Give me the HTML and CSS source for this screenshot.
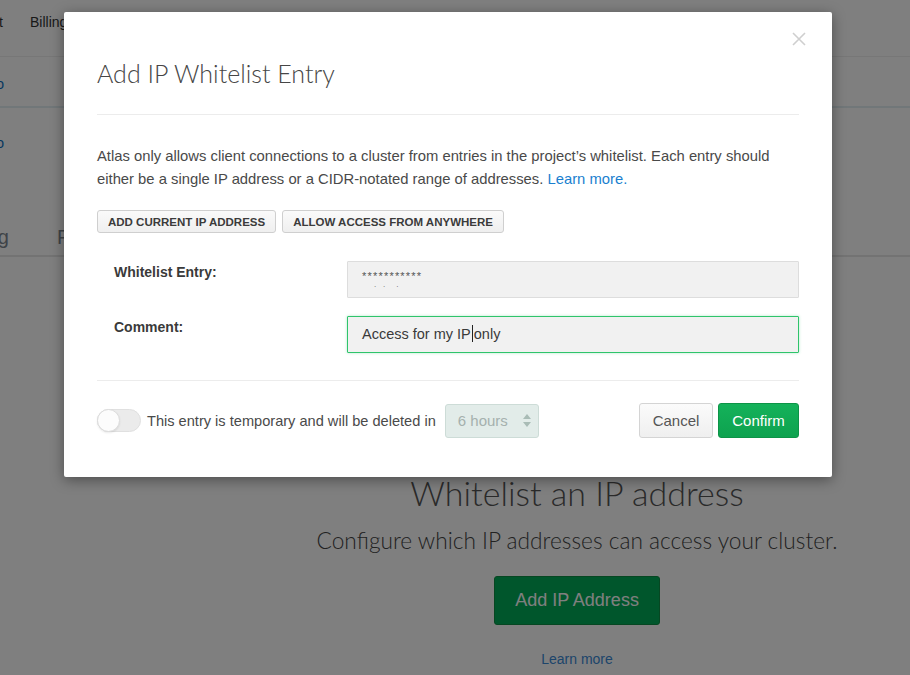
FILE: index.html
```html
<!DOCTYPE html>
<html>
<head>
<meta charset="utf-8">
<link rel="stylesheet" href="styles.css">
</head>
<body>
<div class="page">
  <header class="topnav">
    <span class="navitem clipped">Account</span>
    <span class="navitem">Billing</span>
    <span class="navitem">Support</span>
  </header>
  <div class="subnav">
    <a class="link clipped">Demo</a>
  </div>
  <div class="crumb">
    <a class="link clipped">Go to</a>
  </div>
  <div class="tabs">
    <span class="tab clipped">Logging</span>
    <span class="tab">Performance</span>
  </div>
  <section class="empty">
    <h2 class="empty-title">Whitelist an IP address</h2>
    <p class="empty-sub">Configure which IP addresses can access your cluster.</p>
    <button class="btn-big">Add IP Address</button>
    <a class="empty-link">Learn more</a>
  </section>
</div>

<div class="overlay"></div>

<div class="modal">
  <button class="close" aria-label="Close">
    <svg width="14" height="14" viewBox="0 0 14 14"><path d="M1 1 L13 13 M13 1 L1 13" stroke="#cfcfcf" stroke-width="1.6" fill="none"/></svg>
  </button>
  <h1 class="modal-title">Add IP Whitelist Entry</h1>
  <hr class="sep">
  <p class="intro">Atlas only allows client connections to a cluster from entries in the project’s whitelist. Each entry should either be a single IP address or a CIDR-notated range of addresses. <a class="learn">Learn more.</a></p>
  <div class="quick">
    <button class="btn-small">ADD CURRENT IP ADDRESS</button>
    <button class="btn-small">ALLOW ACCESS FROM ANYWHERE</button>
  </div>
  <div class="form">
    <div class="row">
      <label class="label">Whitelist Entry:</label>
      <div class="field masked"><span class="stars">***********</span><span class="dots">.&nbsp;&nbsp;&nbsp;.&nbsp;&nbsp;&nbsp;&nbsp;&nbsp;.</span></div>
    </div>
    <div class="row">
      <label class="label">Comment:</label>
      <div class="field focused">Access for my IP<span class="caret"></span>only</div>
    </div>
  </div>
  <hr class="sep sep2">
  <div class="footer">
    <span class="toggle"><span class="knob"></span></span>
    <span class="temp">This entry is temporary and will be deleted in</span>
    <span class="select">6 hours
      <svg class="arrows" width="8" height="13" viewBox="0 0 8 13"><path d="M4 0 L8 5 L0 5 Z M4 13 L8 8 L0 8 Z" fill="#a9bcb6"/></svg>
    </span>
    <span class="spacer"></span>
    <button class="btn cancel">Cancel</button>
    <button class="btn confirm">Confirm</button>
  </div>
</div>
</body>
</html>
```
FILE: styles.css
```css
* { box-sizing: border-box; }
html, body { margin: 0; padding: 0; }
body {
  width: 910px;
  height: 675px;
  overflow: hidden;
  position: relative;
  background: #fff;
  font-family: "Liberation Sans", Arial, sans-serif;
  color: #333;
}
button { font-family: inherit; }

/* background page */
.page { width: 910px; }
.topnav {
  height: 57px;
  border-bottom: 1px solid #eee;
  display: flex;
  align-items: flex-start;
  gap: 27px;
  padding-top: 13px;
  font-size: 14px;
  line-height: 18px;
  color: #333;
}
.clipped { display: inline-block; text-align: right; }
.navitem.clipped { width: 100px; margin-left: -97px; }
.subnav {
  height: 51px;
  border-bottom: 2px solid #e3eef2;
  padding-top: 18px;
  font-size: 14px;
  line-height: 18px;
}
.link { color: #0b6fbf; }
.subnav .link.clipped { width: 100px; margin-left: -96px; }
.crumb {
  padding-top: 26px;
  height: 110px;
  font-size: 14px;
  line-height: 18px;
}
.crumb .link.clipped { width: 100px; margin-left: -96px; }
.tabs {
  height: 39px;
  border-bottom: 2px solid #e6e6e6;
  display: flex;
  gap: 48px;
  font-size: 20px;
  line-height: 24px;
  padding-top: 7px;
  color: #8a9aa6;
}
.tab.clipped { width: 100px; margin-left: -91px; }
.tab { color: #7e8790; }
.empty {
  padding-left: 244px;
  padding-top: 215px;
  text-align: center;
  display: flex;
  flex-direction: column;
  align-items: center;
}
.empty-title {
  margin: 0;
  font-family: Lato, "Liberation Sans", sans-serif;
  font-weight: 300;
  font-size: 34px;
  line-height: 42px;
  color: #555;
}
.empty-sub {
  margin: 13px 0 0;
  font-family: Lato, "Liberation Sans", sans-serif;
  font-weight: 300;
  font-size: 22.7px;
  line-height: 28px;
  color: #444;
}
.btn-big {
  margin-top: 21px;
  width: 166px;
  height: 49px;
  border: 1px solid #0c8f44;
  border-radius: 3px;
  background: #00ad58;
  color: #fff;
  font-size: 18px;
}
.empty-link {
  margin-top: 26px;
  font-size: 14px;
  color: #3a8ad6;
}

.overlay {
  position: absolute;
  inset: 0;
  background: rgba(0, 0, 0, 0.5);
}

/* modal */
.modal {
  position: absolute;
  left: 64px;
  top: 12px;
  width: 768px;
  background: #fff;
  border-radius: 2px;
  box-shadow: 0 3px 14px rgba(0, 0, 0, 0.4);
  padding: 46px 33px 39px;
}
.close {
  position: absolute;
  right: 26px;
  top: 20px;
  border: 0;
  background: none;
  padding: 0;
  width: 14px;
  height: 14px;
}
.close svg { display: block; }
.modal-title {
  margin: 0;
  font-family: Lato, "Liberation Sans", sans-serif;
  font-weight: 300;
  font-size: 25px;
  line-height: 30px;
  color: #464646;
}
.sep {
  border: 0;
  border-top: 1px solid #ececec;
  margin: 26px 0 0;
  height: 0;
}
.intro {
  margin: 30px 0 0;
  font-size: 14.8px;
  line-height: 23px;
  color: #494949;
}
.learn { color: #1a7fcf; }
.quick {
  display: flex;
  gap: 6px;
  margin-top: 19px;
}
.btn-small {
  height: 23px;
  padding: 0 10px;
  border: 1px solid #cfcfcf;
  border-radius: 3px;
  background: linear-gradient(#fafafa, #efefef);
  font-size: 11.5px;
  font-weight: bold;
  color: #3b3b3b;
}
.form {
  margin-top: 28px;
  display: flex;
  flex-direction: column;
  gap: 18px;
}
.row {
  display: flex;
  align-items: flex-start;
}
.label {
  width: 250px;
  padding-left: 17px;
  padding-top: 2px;
  font-size: 14px;
  font-weight: bold;
  color: #3a3a3a;
  line-height: 18px;
}
.field {
  flex: 1;
  height: 37px;
  background: #f1f1f1;
  border: 1px solid #ddd;
  border-radius: 1px;
  padding: 0 14px;
  font-size: 14.5px;
  line-height: 35px;
  color: #3a3a3a;
}
.field.masked {
  display: flex;
  flex-direction: column;
  line-height: 1;
  padding-top: 9px;
}
.stars {
  font-size: 11px;
  color: #555;
  letter-spacing: 1.2px;
  line-height: 10px;
}
.dots {
  font-size: 8px;
  line-height: 8px;
  color: #666;
  padding-left: 12px;
}
.field.focused {
  height: 37px;
  border: 1px solid #2fc46b;
  box-shadow: 0 0 3px rgba(30, 190, 100, 0.35);
  line-height: 34px;
}
.caret {
  display: inline-block;
  width: 1px;
  height: 17px;
  background: #222;
  vertical-align: -3px;
  margin: 0 1px;
}
.sep2 { margin-top: 27px; }
.footer {
  margin-top: 22px;
  display: flex;
  align-items: center;
  height: 35px;
}
.toggle {
  position: relative;
  width: 44px;
  height: 23px;
  border-radius: 12px;
  background: #ebebeb;
  border: 1px solid #e0e0e0;
  flex: none;
}
.knob {
  position: absolute;
  left: -1px;
  top: -1px;
  width: 23px;
  height: 23px;
  border-radius: 50%;
  background: #fcfcfc;
  border: 1px solid #dcdcdc;
  box-shadow: 0 1px 2px rgba(0,0,0,0.08);
}
.temp {
  margin-left: 6px;
  font-size: 14.6px;
  color: #4a4a4a;
}
.select {
  margin-left: 9px;
  width: 94px;
  height: 34px;
  display: flex;
  align-items: center;
  justify-content: space-between;
  padding: 0 7px 0 12px;
  background: #e2ece9;
  border: 1px solid #cddcd7;
  border-radius: 3px;
  font-size: 15px;
  color: #a5b1ae;
}
.arrows { display: block; }
.spacer { flex: 1; }
.btn {
  height: 35px;
  border-radius: 3px;
  font-size: 15px;
}
.cancel {
  width: 74px;
  border: 1px solid #d4d4d4;
  background: linear-gradient(#fbfbfb, #efefef);
  color: #555;
}
.confirm {
  width: 81px;
  margin-left: 5px;
  border: 1px solid #0d9447;
  background: linear-gradient(#14b25a, #0ea24f);
  color: #fff;
  font-weight: 500;
}
```
